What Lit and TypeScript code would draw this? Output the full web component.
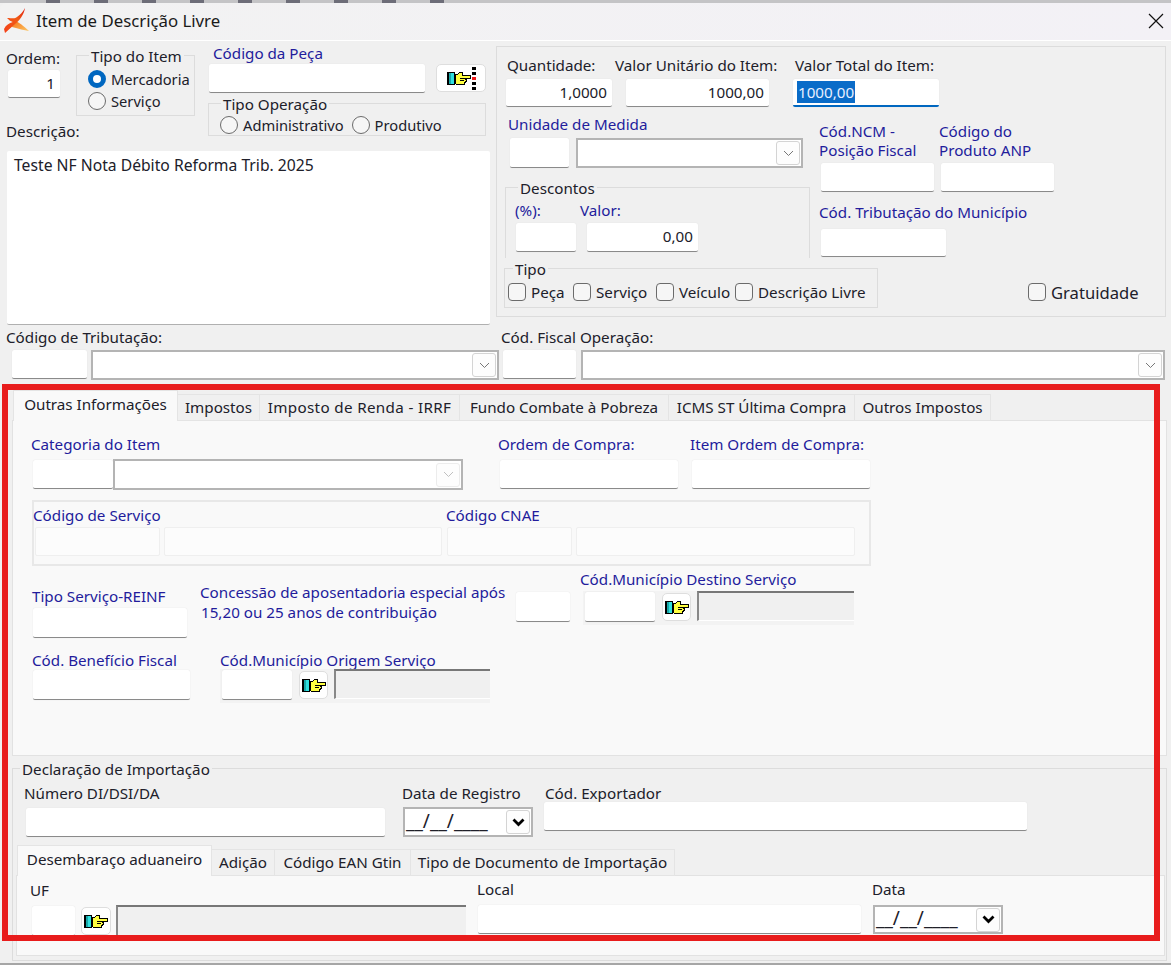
import { LitElement, html, css, unsafeCSS, svg } from "lit";
import { customElement } from "lit/decorators.js";

const gen = (p: string, prop: string, vals: number[]) =>
  vals.map((v) => `.${p}-${String(v).replace("-", "n")}{${prop}:${v}px}`).join("");
const range = (a: number, b: number) => Array.from({ length: b - a + 1 }, (_, i) => a + i);
const utils =
  gen("w", "width", [29, 30, 43, 50, 52, 54, 56, 59, 60, 61, 63, 65, 70, 73, 75, 79, 80, 82, 83, 106, 111, 113, 119, 120, 125, 130, 136, 142, 143, 146, 154, 156, 157, 165, 178, 186, 195, 200, 204, 209, 216, 227, 264, 278, 279, 280, 305, 322, 350, 359, 374, 378, 383, 395, 408, 413, 450, 460, 483, 496, 501, 584, 670, 839, 1149, 1155]) +
  gen("h", "height", [28, 29, 30, 31, 33, 40, 56, 61, 66, 67, 71, 75, 81, 110, 151, 174, 193, 271, 284, 336]) +
  gen("ml", "margin-left", [...range(-12, 40), 150]) +
  gen("mt", "margin-top", range(-2, 30));

const hand = () => svg`<svg class="hand" width="24" height="16" viewBox="0 0 24 16" shape-rendering="crispEdges">
  <rect x="0" y="2" width="8" height="13" fill="#000"/><rect x="2" y="3" width="2" height="11" fill="#1aa8a8"/><rect x="4" y="3" width="3" height="11" fill="#2fe0e0"/>
  <path d="M8 4h3l2-2h2v3h8v3h-5v1h1v2h-1v1h-1v2H9l-1-1z" fill="#ffff40" stroke="#000"/>
  <path d="M13 8h5M13 10h4" stroke="#000" fill="none"/></svg>`;
const chev = () => svg`<svg width="11" height="7" viewBox="0 0 11 7"><path d="M1 1l4.500 4.500L10 1" fill="none" stroke="#777" stroke-width="1"/></svg>`;
const chevB = () => svg`<svg width="13" height="9" viewBox="0 0 13 9"><path d="M1.500 1.500L6.500 6.500l5-5" fill="none" stroke="#000" stroke-width="2.800"/></svg>`;

@customElement("app-root")
export class AppRoot extends LitElement {
  static styles = [
    css`
      :host { display: block; width: 1171px; height: 965px; overflow: hidden; position: relative; background: #f0f0f0;
        font-family: "Noto Sans", "Open Sans", sans-serif; font-size: 15.2px; color: #20202a; }
      * { box-sizing: border-box; flex-shrink: 0; }
      .row { display: flex; align-items: flex-start; }
      .strip { height: 3px; background: #c4c4c6; display: flex; gap: 34px; padding-left: 46px; }
      .strip i { display: block; width: 14px; height: 3px; background: #6d6d78; }
      .title { height: 38px; display: flex; align-items: center; padding: 0 7px 2px 4px; border-bottom: 1px solid #fff;
        background: linear-gradient(90deg, #f2f2f2, #f3f1f6); border-radius: 6px 0 0 0; font-size: 16.800px; color: #1a1a1a; }
      .title span { margin-left: 6px; flex: 1; }
      .lb { height: 18px; line-height: 16px; white-space: nowrap; position: relative; }
      .blue { color: #231c9c; }
      .two { line-height: 19px; height: 39px; white-space: nowrap; margin-top: -1px; }
      .lb2 { line-height: 20px; white-space: nowrap; margin-top: 11px; }
      .in { background: #fff; border-bottom: 1px solid #8a8a8a; border-radius: 2px; line-height: 26px; padding: 0 5px; white-space: nowrap; position: relative; box-shadow: 0 0 1px #d8d8d8; }
      .in.right { text-align: right; }
      .in.faint { background: #fcfcfc; border: 1px solid #efefef; box-shadow: none; }
      .in.focus { border-bottom: 2px solid #0067c0; padding: 2px 4px; line-height: 22px; }
      .in.focus b { font-weight: 400; display: inline-block; background: #0a6cc8; color: #e8f0ff; height: 22px; padding: 0 1px; }
      .combo { background: #fff; border: 2px solid #b4b4b4; display: flex; justify-content: flex-end; align-items: center; padding-right: 1px; position: relative; }
      .combo .cb { width: 24px; height: 24px; border: 1px solid #d4d4d4; border-radius: 3px; display: flex; align-items: center; justify-content: center; background: #fdfdfd; }
      .combo.off .cb { border-color: #ececec; } .combo.off svg { opacity: .45; }
      .date { justify-content: space-between; padding: 0 1px 0 1px; }
      .date span { font-size: 19px; line-height: 24px; margin-top: -3px; }
      .btn { background: #fff; border: 1px solid #dedede; border-radius: 5px; display: flex; align-items: center; justify-content: center; position: relative; }
      .dots { width: 4px; height: 23px; margin-left: 1px; background: repeating-linear-gradient(#000 0 3px, transparent 3px 5px); }
      .dots::after { content: ""; display: block; height: 3px; margin-top: 10px; background: #f01818; }
      .grey { background: #f0f0f0; border-top: 2px solid #777; border-left: 2px solid #888; border-bottom: 1px solid #fff; position: relative; }
      .box { border: 1px solid #dcdcdc; background: #f0f0f0; }
      .box.open { border-bottom: 0; }
      .lg { display: block; width: fit-content; height: 18px; line-height: 16px; padding: 0 2px; margin-top: -8px; background: #f0f0f0; white-space: nowrap; }
      .opt { height: 22px; display: flex; align-items: center; white-space: nowrap; }
      .sm { font-size: 14.700px; }
      .radio { width: 18px; height: 18px; border: 1.500px solid #6b6b6b; border-radius: 50%; margin-right: 5px; background: #f6f6f6; }
      .radio.on { border: 5px solid #0067c0; background: #fff; }
      .check { width: 18px; height: 18px; border: 1.500px solid #6b6b6b; border-radius: 4px; margin-right: 5px; background: #f6f6f6; }
      .big { font-size: 16.600px; }
      .desc { background: #fff; border-bottom: 1px solid #b0b0b0; border-radius: 2px; padding: 5px 7px; line-height: 18px; font-size: 15.700px; }
      .tabs { display: flex; align-items: flex-start; position: relative; z-index: 1; height: 31px; margin-bottom: -1px; }
      .tab { height: 27px; margin-top: 4px; background: #f0f0f0; border: 1px solid #e4e4e4; border-left: 0; text-align: center; line-height: 25px; white-space: nowrap; }
      .tab.active { height: 31px; margin-top: 0; background: #f9f9f9; border: 1px solid #e4e4e4; border-bottom: 0; line-height: 26px; }
      .wide { letter-spacing: .35px; }
      .panel { background: #f9f9f9; border: 1px solid #e2e2e2; }
      .gbox { border: 2px solid #e8e8e8; background: #f9f9f9; }
      .cluster { position: relative; background: #f3f3f3; padding-bottom: 3px; }
      .winb { height: 2px; background: #a6a6a6; }
      .marker { position: absolute; left: 2px; top: 384px; width: 1158px; height: 557px; border: 6px solid #e81c1c; pointer-events: none; z-index: 5; }
    `,
    unsafeCSS(utils),
  ];

  render() {
    return html`
      <div class="strip"><i></i><i></i><i></i><i></i><i></i><i></i><i></i><i></i><i></i></div>
      <div class="title">
        <svg width="26" height="26" viewBox="0 0 26 26">
          <defs><linearGradient id="g" x1="0" y1="1" x2="1" y2="0"><stop offset="0" stop-color="#f4401a"/><stop offset=".6" stop-color="#f05a14"/><stop offset="1" stop-color="#e01c10"/></linearGradient>
          <linearGradient id="h" x1="0" y1="0" x2="1" y2="1"><stop offset="0" stop-color="#f56a10"/><stop offset="1" stop-color="#fcc866"/></linearGradient></defs>
          <path d="M9 11 C14 14 20 18 25 23 C20 22 15 21 8 19Z" fill="url(#h)"/>
          <path d="M21 0 C20 7 15 13 11 16 L1 25 L0 21 C2 17 5 15 9 14 C6 13 5 12 3 10 C8 10 11 11 13 9 C16 7 19 4 21 0Z" fill="url(#g)"/>
        </svg>
        <span>Item de Descrição Livre</span>
        <svg width="16" height="16" viewBox="0 0 16 16"><path d="M1 1l14 14M15 1L1 15" stroke="#111" stroke-width="1.200"/></svg>
      </div>

      <div class="row h-284">
        <div class="w-496">
          <div class="row h-110">
            <div class="w-204">
              <div class="row h-75">
                <div class="ml-6 mt-9 w-56">
                  <div class="lb">Ordem:</div>
                  <div class="in right ml-2 mt-2 w-52 h-28">1</div>
                </div>
                <div class="box ml-14 mt-14 w-119 h-61">
                  <span class="lg ml-12">Tipo do Item</span>
                  <div class="opt sm ml-11 mt-2"><i class="radio on"></i>Mercadoria</div>
                  <div class="opt sm ml-11"><i class="radio"></i>Serviço</div>
                </div>
              </div>
              <div class="lb ml-6 mt-7">Descrição:</div>
            </div>
            <div class="w-279 ml-4">
              <div class="lb blue ml-5 mt-4">Código da Peça</div>
              <div class="row mt-1">
                <div class="in ml-1 w-216 h-29"></div>
                <div class="btn ml-11 w-50 h-28">${hand()}<i class="dots"></i></div>
              </div>
              <div class="box mt-10 w-278 h-33">
                <span class="lg ml-12">Tipo Operação</span>
                <div class="row">
                  <div class="opt sm ml-11"><i class="radio"></i>Administrativo</div>
                  <div class="opt sm ml-8"><i class="radio"></i>Produtivo</div>
                </div>
              </div>
            </div>
          </div>
          <div class="desc ml-7 w-483 h-174">Teste NF Nota Débito Reforma Trib. 2025</div>
        </div>

        <div class="box mt-5 w-670 h-271">
          <div class="row mt-10">
            <div class="ml-9 w-106">
              <div class="lb ml-1">Quantidade:</div>
              <div class="in right mt-4 w-106 h-28">1,0000</div>
            </div>
            <div class="ml-14 w-143">
              <div class="lb ml-n11">Valor Unitário do Item:</div>
              <div class="in right mt-4 w-143 h-28">1000,00</div>
            </div>
            <div class="ml-24 w-146">
              <div class="lb ml-2">Valor Total do Item:</div>
              <div class="in focus mt-4 w-146 h-28"><b>1000,00</b></div>
            </div>
          </div>
          <div class="row h-151">
            <div class="w-322">
              <div class="lb blue ml-11 mt-9">Unidade de Medida</div>
              <div class="row mt-4">
                <div class="in ml-13 w-59 h-30"></div>
                <div class="combo ml-7 w-227 h-30"><div class="cb">${chev()}</div></div>
              </div>
              <div class="box open ml-8 mt-19 w-305 h-71">
                <span class="lg ml-12">Descontos</span>
                <div class="row mt-4">
                  <div class="ml-9 w-65">
                    <div class="lb blue">(%):</div>
                    <div class="in ml-1 mt-3 w-60 h-29"></div>
                  </div>
                  <div>
                    <div class="lb blue">Valor:</div>
                    <div class="in right ml-7 mt-3 w-111 h-29">0,00</div>
                  </div>
                </div>
              </div>
            </div>
            <div>
              <div class="row mt-16">
                <div class="w-120">
                  <div class="two blue">Cód.NCM -<br />Posição Fiscal</div>
                  <div class="in ml-2 mt-2 w-113 h-29"></div>
                </div>
                <div>
                  <div class="two blue">Código do<br />Produto ANP</div>
                  <div class="in ml-2 mt-2 w-113 h-29"></div>
                </div>
              </div>
              <div class="lb blue mt-12">Cód. Tributação do Município</div>
              <div class="in ml-2 mt-7 w-125 h-28"></div>
            </div>
          </div>
          <div class="row mt-10">
            <div class="box ml-7 w-374 h-40">
              <span class="lg ml-8">Tipo</span>
              <div class="row mt-2 ml-3">
                <div class="opt w-65"><i class="check"></i>Peça</div>
                <div class="opt w-83"><i class="check"></i>Serviço</div>
                <div class="opt w-79"><i class="check"></i>Veículo</div>
                <div class="opt"><i class="check"></i>Descrição Livre</div>
              </div>
            </div>
            <div class="opt big ml-150 mt-13"><i class="check"></i>Gratuidade</div>
          </div>
        </div>
      </div>

      <div class="row h-56">
        <div class="w-501">
          <div class="lb ml-6 mt-4">Código de Tributação:</div>
          <div class="row mt-3">
            <div class="in ml-12 w-75 h-29"></div>
            <div class="combo ml-4 w-408 h-30"><div class="cb">${chev()}</div></div>
          </div>
        </div>
        <div>
          <div class="lb mt-4">Cód. Fiscal Operação:</div>
          <div class="row mt-3">
            <div class="in ml-2 w-73 h-29"></div>
            <div class="combo ml-5 w-584 h-30"><div class="cb">${chev()}</div></div>
          </div>
        </div>
      </div>

      <div class="tabs ml-13 mt-9">
        <div class="tab active w-165">Outras Informações</div>
        <div class="tab w-82">Impostos</div>
        <div class="tab wide w-200">Imposto de Renda - IRRF</div>
        <div class="tab w-209">Fundo Combate à Pobreza</div>
        <div class="tab w-186">ICMS ST Última Compra</div>
        <div class="tab w-136">Outros Impostos</div>
      </div>
      <div class="panel ml-12 w-1155 h-336">
        <div class="row mt-15">
          <div class="w-450">
            <div class="lb blue ml-18">Categoria do Item</div>
            <div class="row ml-20 mt-5">
              <div class="in mt-1 w-80 h-29"></div>
              <div class="combo off w-350 h-31"><div class="cb">${chev()}</div></div>
            </div>
          </div>
          <div class="ml-35">
            <div class="lb blue">Ordem de Compra:</div>
            <div class="in ml-2 mt-6 w-178 h-29"></div>
          </div>
          <div class="ml-12">
            <div class="lb blue">Item Ordem de Compra:</div>
            <div class="in ml-2 mt-6 w-178 h-29"></div>
          </div>
        </div>
        <div class="gbox ml-19 mt-10 w-839 h-66">
          <div class="row mt-5">
            <div class="ml-n1 w-413">
              <div class="lb blue">Código de Serviço</div>
              <div class="row ml-2 mt-2">
                <div class="in faint w-125 h-29"></div>
                <div class="in faint ml-4 w-278 h-29"></div>
              </div>
            </div>
            <div>
              <div class="lb blue">Código CNAE</div>
              <div class="row ml-1 mt-2">
                <div class="in faint w-125 h-29"></div>
                <div class="in faint ml-4 w-279 h-29"></div>
              </div>
            </div>
          </div>
        </div>
        <div class="row mt-5 h-67">
          <div class="ml-19 mt-17 w-154">
            <div class="lb blue">Tipo Serviço-REINF</div>
            <div class="in ml-1 mt-2 w-154 h-30"></div>
          </div>
          <div class="lb2 blue ml-14 w-280">Concessão de aposentadoria especial após<div class="ml-1">15,20 ou 25 anos de contribuição</div></div>
          <div class="in ml-36 mt-21 w-54 h-30"></div>
          <div class="ml-10">
            <div class="lb blue">Cód.Município Destino Serviço</div>
            <div class="row cluster mt-2 ml-3">
              <div class="in ml-2 mt-1 w-70 h-30"></div>
              <div class="btn ml-7 mt-2 w-29 h-28">${hand()}</div>
              <div class="grey ml-6 w-157 h-30"></div>
            </div>
          </div>
        </div>
        <div class="row mt-14">
          <div class="ml-19 w-157">
            <div class="lb blue">Cód. Benefício Fiscal</div>
            <div class="in ml-1 w-157 h-30"></div>
          </div>
          <div class="ml-31">
            <div class="lb blue">Cód.Município Origem Serviço</div>
            <div class="row cluster mt-n1">
              <div class="in ml-2 mt-1 w-70 h-30"></div>
              <div class="btn ml-7 mt-2 w-29 h-28">${hand()}</div>
              <div class="grey ml-6 w-156 h-30"></div>
            </div>
          </div>
        </div>
      </div>

      <div class="box ml-12 mt-12 w-1155 h-193">
        <span class="lg ml-7">Declaração de Importação</span>
        <div class="row mt-6">
          <div class="ml-11 w-378">
            <div class="lb">Número DI/DSI/DA</div>
            <div class="in ml-2 mt-5 w-359 h-29"></div>
          </div>
          <div class="w-142">
            <div class="lb">Data de Registro</div>
            <div class="combo date ml-1 mt-4 w-130 h-30"><span>__/__/____</span><div class="cb">${chevB()}</div></div>
          </div>
          <div>
            <div class="lb ml-1">Cód. Exportador</div>
            <div class="in mt-n1 w-483 h-29"></div>
          </div>
        </div>
        <div class="tabs ml-4 mt-8">
          <div class="tab active w-195">Desembaraço aduaneiro</div>
          <div class="tab w-63">Adição</div>
          <div class="tab w-136">Código EAN Gtin</div>
          <div class="tab w-264">Tipo de Documento de Importação</div>
        </div>
        <div class="panel ml-3 w-1149 h-81">
          <div class="row mt-6">
            <div class="w-460">
              <div class="lb ml-13">UF</div>
              <div class="row ml-15 mt-5">
                <div class="in mt-1 w-43 h-30"></div>
                <div class="btn ml-6 mt-2 w-30 h-28">${hand()}</div>
                <div class="grey ml-5 w-350 h-31"></div>
              </div>
            </div>
            <div class="w-395">
              <div class="lb mt-n1">Local</div>
              <div class="in ml-1 mt-6 w-383 h-29"></div>
            </div>
            <div>
              <div class="lb mt-n1">Data</div>
              <div class="combo date ml-1 mt-6 w-130 h-29"><span>__/__/____</span><div class="cb">${chevB()}</div></div>
            </div>
          </div>
        </div>
      </div>
      <div class="winb mt-2"></div>

      <div class="marker"></div>
    `;
  }
}
